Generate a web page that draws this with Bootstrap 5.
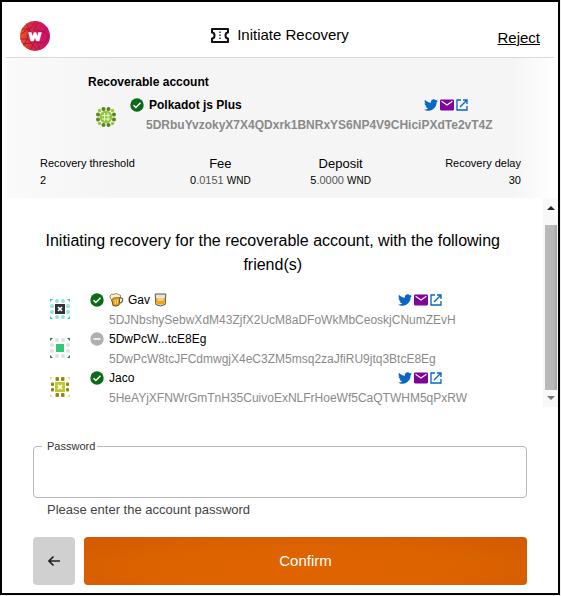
<!DOCTYPE html>
<html lang="en">
<head>
<meta charset="utf-8">
<meta name="viewport" content="width=device-width, initial-scale=1">
<title>Initiate Recovery</title>
<link href="https://cdn.jsdelivr.net/npm/bootstrap@5.3.0/dist/css/bootstrap.min.css" rel="stylesheet">
<style>
body { font-family: "Liberation Sans", Arial, sans-serif; font-size: 12px; line-height: 18px; color: #000; background: #f1f1f1; }
svg { display: block; flex: none; }
.popup { min-height: 595px; margin-right: 1px; border: 2px solid #000; background: #fff; }
.topbar { height: 56px; margin: 0 4px; padding: 0 14px; border-bottom: 1px solid #d8d8d8; }
.logo { margin-top: 19px; }
.title { font-size: 15px; margin-top: 24px; gap: 8px; }
.reject { font-size: 15px; margin-top: 27px; color: #000; }
.summary { margin: 0 2px 0 5px; padding: 15px 0 9px; background: linear-gradient(90deg, #fafafa, #f5f5f5 20%, #f5f5f5 92%, #fff); }
.account { padding-left: 81px; }
.account-icon { margin: 11px 13px 0 7px; }
.account-name { height: 20px; padding-right: 88px; }
.address { color: #8a8a8a; line-height: 21px; }
.facts { padding: 19px 35px 0 33px; font-size: 11px; }
.fact-title { font-size: 13px; }
.facts div { line-height: 17px; }
.unit { font-size: 10px; }
.dim { color: #555; }
.list-pane { height: 209px; }
.message { font-size: 16px; line-height: 24px; padding: 31px 20px 0 20px; margin-bottom: 14px; text-align: center; }
.friend { height: 39px; padding-left: 48px; }
.friend-icon { margin: 8px 20px 0 0; }
.friend-name { height: 18px; padding-right: 101px; }
.friend .address { padding-left: 19px; line-height: 23px; }
.name { padding-left: 5px; }
.links { gap: 2px; }
.track { width: 15px; padding: 7px 0 6px; background: #f8f8f8; }
.thumb { width: 12px; margin: 15px 0 6px; background: linear-gradient(90deg, #b9b9b9 70%, #a6a6a6); }
.actions { padding: 31px 31px 8px; }
.pw-box { margin: 0; padding: 0 0 0 8px; border: 1px solid #b9b9b9; border-radius: 4px; height: 60px; }
.pw-box legend { float: none; width: auto; margin: 0; padding: 0 2px 0 5px; font-size: 11px; line-height: 17px; color: #333; }
.pw-box input { display: block; width: 100%; height: 40px; padding: 0 5px; border: 0; background: transparent; outline: 0; font-size: 15px; }
.hint { font-size: 13px; padding-left: 14px; margin-top: 3px; color: #444; }
.buttons { gap: 9px; margin-top: 18px; }
.back { width: 42px; height: 48px; background: #d0d0d0; border: 0; border-radius: 4px; }
.confirm { height: 48px; border: 0; border-radius: 4px; color: #fff; font-size: 15px; background: radial-gradient(ellipse at 50% 65%, #e06500 0, #dc6200 55%, #d05a00 100%); }
</style>
<script src="https://cdn.jsdelivr.net/npm/bootstrap@5.3.0/dist/js/bootstrap.bundle.min.js"></script>
</head>
<body>
<svg class="d-none" aria-hidden="true">
  <symbol id="check" viewBox="0 0 24 24"><circle cx="12" cy="12" r="11.5" fill="#0b6b16"/><path d="M6 12.3l4 4 8-8.300" fill="none" stroke="#fff" stroke-width="2.600"/></symbol>
  <symbol id="minus" viewBox="0 0 24 24"><circle cx="12" cy="12" r="11.500" fill="#b0b0b0"/><path d="M6 12h12" stroke="#fff" stroke-width="2.600"/></symbol>
  <symbol id="bird" viewBox="0 0 512 512"><path fill="#0767c2" d="M459.370 151.716c.325 4.548.325 9.097.325 13.645 0 138.720-105.583 298.558-298.558 298.558-59.452 0-114.680-17.219-161.137-47.106 8.447.974 16.568 1.299 25.340 1.299 49.055 0 94.213-16.568 130.274-44.832-46.132-.975-84.792-31.188-98.112-72.772 6.498.974 12.995 1.624 19.818 1.624 9.421 0 18.843-1.300 27.614-3.573-48.081-9.747-84.143-51.980-84.143-102.985v-1.299c13.969 7.797 30.214 12.670 47.431 13.319-28.264-18.843-46.781-51.005-46.781-87.391 0-19.492 5.197-37.360 14.294-52.954 51.655 63.675 129.300 105.258 216.365 109.807-1.624-7.797-2.599-15.918-2.599-24.040 0-57.828 46.782-104.934 104.934-104.934 30.213 0 57.502 12.670 76.670 33.137 23.715-4.548 46.456-13.320 66.599-25.340-7.798 24.366-24.366 44.833-46.132 57.827 21.117-2.273 41.584-8.122 60.426-16.243-14.292 20.791-32.161 39.308-52.628 54.253z"/></symbol>
  <symbol id="mail" viewBox="0 0 26 24"><rect y="2" width="26" height="20" rx="2" fill="#800499"/><path d="M3 5l10 7 10-7" fill="none" stroke="#fff" stroke-width="2"/></symbol>
  <symbol id="open" viewBox="0 0 24 24"><path d="M10 2H2v20h20v-8M14 2h8v8M22 2L8 16" fill="none" stroke="#0767c2" stroke-width="2.700"/></symbol>
</svg>
<main class="popup d-flex flex-column">
  <header class="topbar row g-0">
    <div class="col-3"><svg class="logo" width="30" height="30" viewBox="0 0 30 30" role="img" aria-label="Westend">
      <defs><linearGradient id="lg"><stop offset="0" stop-color="#e8571b"/><stop offset=".4" stop-color="#d02a43"/><stop offset="1" stop-color="#cc0b70"/></linearGradient><clipPath id="lc"><circle cx="15" cy="15" r="15"/></clipPath></defs>
      <circle cx="15" cy="15" r="15" fill="url(#lg)"/>
      <g clip-path="url(#lc)" fill="none" stroke="#a80d50" stroke-width=".8"><path d="M0 8h10l6-8M1 13l7-5 14 14M0 18h8l9 11M5 0l4 8-2 11-5 8M18 1l-4 8 10 2 4-5M10 30l4-9 10 1 5-6M20 28l-3-7M24 11l5 4M3 23l9-1"/></g>
      <path d="M8.500 11.500h3l.8 4 1.700-4h2l1.600 4 .7-4h3.200l-2.300 8.500h-2.700l-1.500-3.500-1.500 3.500h-2.700z" fill="#fff" stroke="#fff" stroke-width=".4"/>
    </svg></div>
    <h1 class="title col-6 d-flex justify-content-center align-items-center align-self-start mb-0 fw-normal">
      <svg width="18" height="15" viewBox="0 0 18 15" fill="none" stroke="#111" stroke-width="2"><path d="M1 1h16v3.500q-2.500 0-2.500 3t2.500 3V14H1v-3.500q2.500 0 2.500-3T1 4.500z" stroke-linejoin="round"/><path d="M9 3.500v9" stroke-width="1.300" stroke-dasharray="1.500 1.500"/></svg>
      <span>Initiate Recovery</span></h1>
    <div class="col-3 text-end"><a class="reject d-inline-block" href="#">Reject</a></div>
  </header>
  <section class="summary">
    <div class="account fw-bold">
      <div>Recoverable account</div>
      <div class="d-flex mt-1">
        <svg class="account-icon" width="22" height="22" viewBox="-11 -11 22 22"><g fill="#93c83e"><circle r="6.500"/><circle cx="-6.500" cy="-6.500" r="1.700"/><circle cx="6.500" cy="-6.500" r="1.700"/><circle cx="-6.500" cy="6.500" r="1.700"/><circle cx="6.500" cy="6.500" r="1.700"/></g><g fill="#59851a"><circle cx="-2.500" cy="-8" r="2"/><circle cx="2.500" cy="-8" r="2"/><circle cx="-2.500" cy="8" r="2"/><circle cx="2.500" cy="8" r="2"/><circle cx="-8" cy="-2.500" r="2"/><circle cx="-8" cy="2.500" r="2"/><circle cx="8" cy="-2.500" r="2"/><circle cx="8" cy="2.500" r="2"/></g><path d="M-4-1.500h8M-4 2h8M-1.500-4v8M2-4v8" stroke="#e9f5d5" stroke-width="1"/></svg>
        <div class="flex-grow-1">
          <div class="account-name d-flex align-items-center">
            <svg width="14" height="14"><use href="#check"/></svg><span class="name">Polkadot js Plus</span>
            <span class="links d-flex ms-auto"><a href="#" aria-label="Twitter"><svg width="14" height="14"><use href="#bird"/></svg></a><a href="#" aria-label="Email"><svg width="14" height="14"><use href="#mail"/></svg></a><a href="#" aria-label="Website"><svg width="12" height="14"><use href="#open"/></svg></a></span>
          </div>
          <div class="address ps-3">5DRbuYvzokyX7X4QDxrk1BNRxYS6NP4V9CHiciPXdTe2vT4Z</div>
        </div>
      </div>
    </div>
    <div class="facts row g-0">
      <div class="col-3"><div>Recovery threshold</div><div>2</div></div>
      <div class="col-3 text-center"><div class="fact-title">Fee</div><div>0<span class="dim">.0151</span> <span class="unit">WND</span></div></div>
      <div class="col-3 text-center"><div class="fact-title">Deposit</div><div>5<span class="dim">.0000</span> <span class="unit">WND</span></div></div>
      <div class="col-3 text-end"><div>Recovery delay</div><div>30</div></div>
    </div>
  </section>
  <section class="list-pane d-flex">
    <div class="flex-grow-1">
      <p class="message">Initiating recovery for the recoverable account, with the following friend(s)</p>
      <div class="friend d-flex">
        <svg class="friend-icon" width="20" height="20" viewBox="0 0 20 20"><g fill="#91e3db"><circle cx="7" cy="2" r="2"/><circle cx="13" cy="2" r="2"/><circle cx="7" cy="18" r="2"/><circle cx="13" cy="18" r="2"/><circle cx="2" cy="7" r="2"/><circle cx="2" cy="13" r="2"/><circle cx="18" cy="7" r="2"/><circle cx="18" cy="13" r="2"/></g><path fill="#36cabb" d="M0 0h3L0 3zM20 0h-3l3 3zM0 20h3l-3-3zM20 20h-3l3-3z"/><path fill="#303236" d="M5 5h10v10H5z"/><path d="M8 8l4 4M12 8l-4 4" stroke="#fff" stroke-width="1.700"/></svg>
        <div class="flex-grow-1">
          <div class="friend-name d-flex align-items-center"><svg width="14" height="14"><use href="#check"/></svg>
            <span class="name d-flex align-items-center gap-1">
              <svg width="15" height="14" viewBox="0 0 15 14" role="img" aria-label="Beer"><path d="M2 4l2 8.500q3 1.500 6-.5l1-8z" fill="#e7a21d" stroke="#73491a"/><path d="M10.500 5q4-.8 3 2.500t-3.500 2" fill="none" stroke="#69645d" stroke-width="1.300"/><path d="M1 3q1-2.500 3.500-1.700Q8-.4 9.500 1.500q3 0 2 3L4 5q0 2-1.500 1.500Q.5 5.500 1 3z" fill="#fff0c8" stroke="#6b5434" stroke-width=".7"/><path d="M6 7l.6 4M8.500 7v3.500" stroke="#ffe27a"/></svg>
              <span>Gav</span>
              <svg width="13" height="14" viewBox="0 0 12 14" role="img" aria-label="Whisky"><path d="M.7 1l.6 10.500q4.700 3 9.400 0L11.300 1z" fill="#e9e4d8" stroke="#555"/><path d="M1.200 5h9.600l-.5 5.500q-4.300 2-8.600 0z" fill="#f0a321"/><path d="M3 5h6v3H3z" fill="#ffcf66"/></svg>
            </span>
            <span class="links d-flex ms-auto"><a href="#" aria-label="Twitter"><svg width="14" height="14"><use href="#bird"/></svg></a><a href="#" aria-label="Email"><svg width="14" height="14"><use href="#mail"/></svg></a><a href="#" aria-label="Website"><svg width="12" height="14"><use href="#open"/></svg></a></span></div>
          <div class="address">5DJNbshySebwXdM43ZjfX2UcM8aDFoWkMbCeoskjCNumZEvH</div>
        </div>
      </div>
      <div class="friend d-flex">
        <svg class="friend-icon" width="20" height="20" viewBox="0 0 20 20"><g fill="#e0e0e0"><circle cx="7" cy="2" r="2"/><circle cx="13" cy="2" r="2"/><circle cx="7" cy="18" r="2"/><circle cx="13" cy="18" r="2"/><circle cx="2" cy="7" r="2"/><circle cx="2" cy="13" r="2"/><circle cx="18" cy="7" r="2"/><circle cx="18" cy="13" r="2"/></g><path fill="#158b48" d="M0 0h3L0 3zM20 0h-3l3 3zM0 20h3l-3-3zM20 20h-3l3-3z"/><path fill="#34c777" d="M6 6h8v8H6z"/></svg>
        <div class="flex-grow-1">
          <div class="friend-name d-flex align-items-center"><svg width="14" height="14"><use href="#minus"/></svg><span class="name">5DwPcW...tcE8Eg</span></div>
          <div class="address">5DwPcW8tcJFCdmwgjX4eC3ZM5msq2zaJfiRU9jtq3BtcE8Eg</div>
        </div>
      </div>
      <div class="friend d-flex">
        <svg class="friend-icon" width="20" height="20" viewBox="0 0 20 20"><g fill="#8b8b14"><rect x="5.500" width="3.500" height="4" rx="1"/><rect x="11" width="3.500" height="4" rx="1"/><rect x="5.500" y="16" width="3.500" height="4" rx="1"/><rect x="11" y="16" width="3.500" height="4" rx="1"/><rect x="1" y="5.500" width="3" height="3.500" rx="1"/><rect x="1" y="11" width="3" height="3.500" rx="1"/><rect x="16" y="5.500" width="3" height="3.500" rx="1"/><rect x="16" y="11" width="3" height="3.500" rx="1"/></g><path fill="#dce08a" d="M0 0h3L0 3zM20 0h-3l3 3zM0 20h3l-3-3zM20 20h-3l3-3z"/><path fill="#c3c832" d="M5 5h10v10H5z"/><path d="M8 8l4 4M12 8l-4 4" stroke="#fff" stroke-width="1.700"/></svg>
        <div class="flex-grow-1">
          <div class="friend-name d-flex align-items-center"><svg width="14" height="14"><use href="#check"/></svg><span class="name">Jaco</span>
            <span class="links d-flex ms-auto"><a href="#" aria-label="Twitter"><svg width="14" height="14"><use href="#bird"/></svg></a><a href="#" aria-label="Email"><svg width="14" height="14"><use href="#mail"/></svg></a><a href="#" aria-label="Website"><svg width="12" height="14"><use href="#open"/></svg></a></span></div>
          <div class="address">5HeAYjXFNWrGmTnH35CuivoExNLFrHoeWf5CaQTWHM5qPxRW</div>
        </div>
      </div>
    </div>
    <div class="track d-flex flex-column align-items-center" aria-hidden="true">
      <svg width="8" height="5"><path d="M0 5l4-4 4 4z" fill="#222"/></svg>
      <div class="thumb flex-grow-1"></div>
      <svg width="8" height="5"><path d="M0 0l4 4 4-4z" fill="#777"/></svg>
    </div>
  </section>
  <form class="actions">
    <fieldset class="pw-box"><legend><label class="d-block" for="pw">Password</label></legend><input id="pw" type="password" aria-describedby="pw-hint"></fieldset>
    <div class="hint" id="pw-hint">Please enter the account password</div>
    <div class="buttons d-flex">
      <button type="button" class="back btn p-0 d-flex align-items-center justify-content-center" aria-label="Back"><svg width="12" height="12" viewBox="0 0 12 12" fill="none" stroke="#222" stroke-width="1.700"><path d="M12 6H1M5.500 1.500L1 6l4.500 4.500"/></svg></button>
      <button type="button" class="confirm btn flex-grow-1">Confirm</button>
    </div>
  </form>
</main>
</body>
</html>
